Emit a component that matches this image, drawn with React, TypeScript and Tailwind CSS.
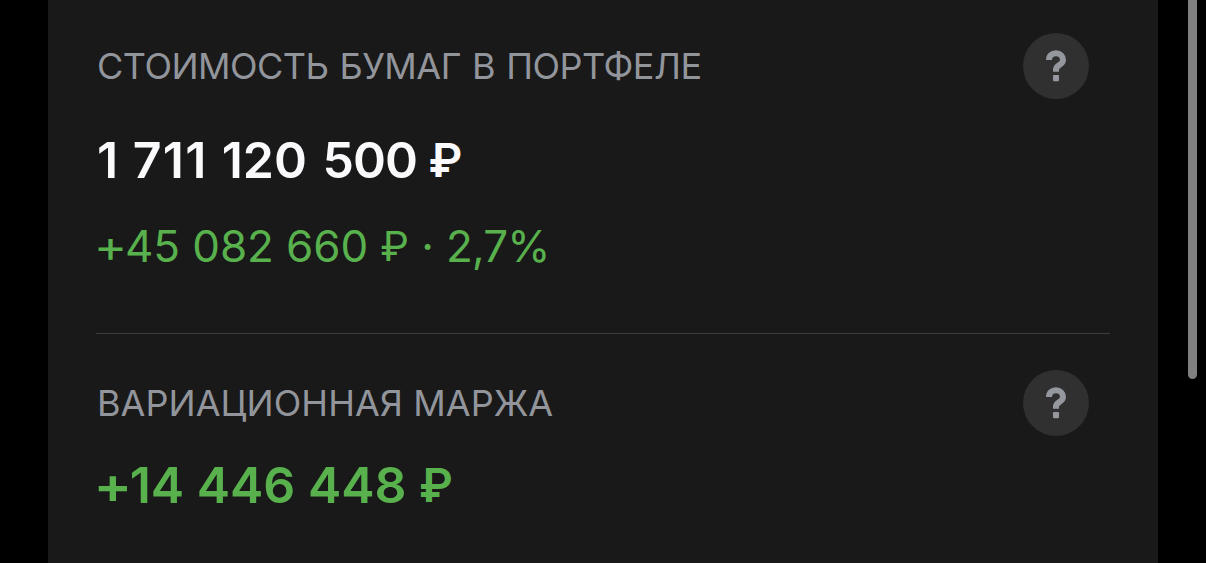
import React from "react";

interface StatProps {
  title: string;
  titleClass?: string;
  children: React.ReactNode;
}

function HelpButton() {
  return (
    <button className="flex size-[66px] items-center justify-center rounded-full bg-[#303030]">
      <svg width="24" height="34" viewBox="0 0 24 34" fill="none">
        <path
          d="M5 11C5 6.8 8 4.2 12 4.2S19 7 19 11C19 16.2 12 15.8 12 20.5V22.7"
          stroke="#94979e"
          strokeWidth="6"
        />
        <rect x="9" y="26" width="6" height="6.3" rx="1" fill="#94979e" />
      </svg>
    </button>
  );
}

function Stat({ title, titleClass, children }: StatProps) {
  return (
    <section>
      <div className="flex h-[66px] items-center justify-between pr-[21px]">
        <h2 className={`text-[36px] leading-none text-[#92959b] ${titleClass}`}>{title}</h2>
        <HelpButton />
      </div>
      {children}
    </section>
  );
}

function Ruble() {
  return <span className="inline-block -translate-y-px text-[0.93em] leading-none">₽</span>;
}

function Plus() {
  return <span className="inline-block scale-x-115 leading-none">+</span>;
}

export default function App() {
  return (
    <div className="flex h-[563px] w-[1206px] overflow-hidden bg-black font-['Inter',sans-serif] whitespace-nowrap [font-feature-settings:'calt'_0]">
      <main className="ml-12 w-[1110px] bg-[#191919] px-12 pt-[33px]">
        <Stat
          title="СТОИМОСТЬ БУМАГ В ПОРТФЕЛЕ"
          titleClass="pl-px tracking-[-0.52px] [word-spacing:1.5px]"
        >
          <div className="mt-[30px] h-[62px] pl-px text-[50px] leading-[62px] font-semibold text-[#fafafc] [font-kerning:none]">
            <span className="tracking-[1px]">1 </span>
            <span className="tracking-[1.3px]">711 </span>
            <span className="[word-spacing:3px]">120 </span>
            <span className="tracking-[-1px]">500 </span>
            <Ruble />
          </div>
          <div className="mt-[24px] h-[62px] text-[44px] leading-[62px] tracking-[-0.1px] text-[#58b14c]">
            <Plus />
            45 082 660 <Ruble /> · <span className="tracking-[-0.9px]">2,7%</span>
          </div>
        </Stat>
        <hr className="mt-[56px] mb-[36px] border-[#3d3d3d]" />
        <Stat title="ВАРИАЦИОННАЯ МАРЖА" titleClass="pl-px tracking-[0.05px]">
          <div className="mt-[18px] h-[62px] text-[50px] leading-[62px] font-semibold text-[#58b14c]">
            <Plus />
            14 446 448 <Ruble />
          </div>
        </Stat>
      </main>
      <div className="ml-[30px] h-[379px] w-[9px] rounded-b-full bg-[#808080]" />
    </div>
  );
}
